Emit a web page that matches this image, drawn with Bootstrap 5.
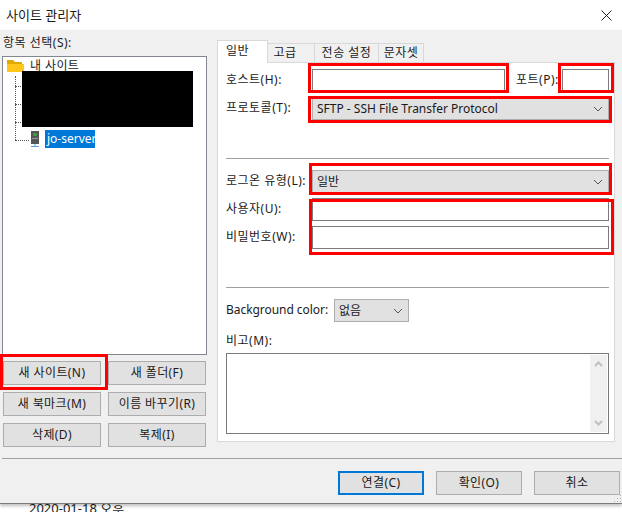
<!DOCTYPE html>
<html lang="ko">
<head>
  <meta charset="UTF-8" />
  <meta name="viewport" content="width=device-width, initial-scale=1" />
  <title>사이트 관리자</title>
  <link href="https://cdn.jsdelivr.net/npm/bootstrap@5.3.0/dist/css/bootstrap.min.css" rel="stylesheet" />
  <style>
    body {
      width: 622px;
      height: 512px;
      overflow: hidden;
      background: #fff;
      color: #1a1a1a;
      font: 12px/16px "Noto Sans", "Noto Sans CJK KR", sans-serif;
      position: relative;
    }
    .title-bar { height: 30px; padding: 0 6px; font-size: 13px; }
    .close-x { margin-left: auto; margin-right: 4px; }
    .dlg { height: 474px; background: #f0f0f0; border-bottom: 1px solid #7a7a7a; box-shadow: 0 2px 3px rgba(0,0,0,.25); position: relative; }
    .main-area { height: 428px; }
    .left-pane { width: 217px; padding: 4px 0 0 2px; }
    .left-pane > label { height: 22px; padding: 1px 0 0 1px; margin: 0; letter-spacing: .5px; }
    .tree { width: 205px; height: 299px; background: #fff; border: 1px solid #828790; position: relative; }
    .tree-row { position: absolute; display: flex; align-items: center; }
    .tree-root { left: 4px; top: 1px; height: 16px; gap: 6px; letter-spacing: .4px; }
    .tree-sel { left: 27px; top: 73px; gap: 5px; height: 18px; }
    .tree-sel span { background: #0078d7; color: #fff; padding: 0 1px 0 2px; line-height: 18px; width: 50px; white-space: nowrap; }
    .redact { position: absolute; left: 19px; top: 14px; width: 171px; height: 56px; background: #000; }
    .dots-v { position: absolute; left: 12px; top: 19px; height: 64px; border-left: 1px dotted #555; }
    .dots-h { position: absolute; left: 12px; width: 14px; border-top: 1px dotted #555; }
    .side-btns { display: grid; grid-template-columns: 98px 98px; column-gap: 7px; row-gap: 7px; margin: 6px 0 0 1px; }
    .win-btn { height: 24px; padding: 0; background: #e1e1e1; border: 1px solid #adadad; border-radius: 0; font-size: 12px; line-height: 16px; color: #1a1a1a; letter-spacing: .4px; }
    .win-btn.is-default { border: 2px solid #0078d7; }
    .right-pane { width: 398px; padding-top: 10px; }
    .tab-strip { height: 22px; border: 0; align-items: flex-end; flex-wrap: nowrap; position: relative; z-index: 1; letter-spacing: .5px; }
    .tab-item { height: 19px; background: #f0f0f0; border: 1px solid #d9d9d9; border-bottom: 0; border-left: 0; text-align: center; line-height: 18px; margin: 0; }
    .tab-item.is-on { background: #fff; border-left: 1px solid #d9d9d9; margin-bottom: -1px; height: 23px; line-height: 20px; padding-right: 10px; }
    .tab-item.tab-short { padding-right: 12px; }
    .tab-box { height: 380px; background: #fff; border: 1px solid #d9d9d9; padding: 6px 5px 0 8px; }
    .form-line { display: flex; align-items: center; }
    .form-line label { width: 86px; flex: none; margin: 0; white-space: nowrap; position: relative; top: -1px; letter-spacing: .5px; }
    .win-input { height: 23px; border: 1px solid #7a7a7a; border-radius: 0; padding: 0 4px; background: #fff; }
    .win-select { height: 23px; border: 1px solid #adadad; border-radius: 0; padding: 0 4px; font-size: 12px; line-height: 16px; color: #1a1a1a; background-color: #e1e1e1; background-size: 10px 6px; background-position: right 5px center; box-shadow: none;
      background-image: url("data:image/svg+xml,%3csvg xmlns='http://www.w3.org/2000/svg' viewBox='0 0 10 6'%3e%3cpath fill='none' stroke='%23555' d='M1 1l4 4 4-4'/%3e%3c/svg%3e"); }
    .form-line .port-label { margin-left: 11px; width: 46px; }
    .form-line .bg-label { width: 108px; letter-spacing: -.05px; }
    .proto-line { margin-top: 6px; }
    .proto-line .win-select { height: 22px; }
    .memo-label { margin: 11px 0 0; height: 20px; letter-spacing: .5px; }
    .divider { height: 1px; background: #a0a0a0; margin: 0; opacity: 1; border: 0; }
    .memo { height: 81px; width: 383px; border: 1px solid #7a7a7a; background: #fff; display: flex; justify-content: flex-end; padding: 1px; }
    .memo-scroll { width: 17px; background: #f0f0f0; display: flex; flex-direction: column; justify-content: space-between; align-items: center; padding: 6px 0; }
    .foot-sep { margin: 0 0 0 2px; height: 1px; background: #a0a0a0; border: 0; opacity: 1; }
    .foot-btns { padding: 12px 2px 0 0; gap: 12px; justify-content: flex-end; }
    .foot-btns .win-btn { width: 86px; }
    .grip { position: absolute; right: 1px; bottom: 1px; width: 8px; height: 8px; background: radial-gradient(circle, #aaa 1px, transparent 1px) 0 0 / 3px 3px; clip-path: polygon(100% 0, 100% 100%, 0 100%); }
    .under-text { padding-left: 29px; line-height: 16px; margin-top: -4px; font-size: 13px; }
    .mark-red { position: absolute; border: 3px solid #f00; pointer-events: none; z-index: 5; }
  </style>
</head>
<body>
  <div class="title-bar d-flex align-items-center">
    <span>사이트 관리자</span>
    <svg class="close-x" width="11" height="11" viewBox="0 0 11 11"><path d="M0.5 0.5l10 10M10.5 0.5l-10 10" stroke="#222" fill="none"/></svg>
  </div>

  <div class="dlg">
    <div class="main-area d-flex">
      <div class="left-pane">
        <label class="d-block">항목 선택(S):</label>
        <div class="tree">
          <div class="tree-row tree-root">
            <svg width="17" height="14" viewBox="0 0 17 14"><path d="M0 1h6l2 2h7v3H0z" fill="#e0a800"/><path d="M0 5h17v8H0z" fill="#ffc61a"/></svg>
            <span>내 사이트</span>
          </div>
          <div class="dots-v"></div>
          <div class="dots-h" style="top: 29px"></div>
          <div class="dots-h" style="top: 47px"></div>
          <div class="dots-h" style="top: 65px"></div>
          <div class="dots-h" style="top: 83px"></div>
          <div class="redact"></div>
          <div class="tree-row tree-sel">
            <svg width="10" height="17" viewBox="0 0 10 17"><rect x="1" y="0" width="8" height="13" fill="#555"/><rect x="3" y="2" width="4" height="3" fill="#3f9a3f"/><rect x="2" y="7" width="6" height="1" fill="#999"/><path d="M5 13v3M1 15.500h8" stroke="#5b9bd5" fill="none"/></svg>
            <span>jo-server</span>
          </div>
        </div>
        <div class="side-btns">
          <button class="btn win-btn">새 사이트(N)</button>
          <button class="btn win-btn">새 폴더(F)</button>
          <button class="btn win-btn">새 북마크(M)</button>
          <button class="btn win-btn">이름 바꾸기(R)</button>
          <button class="btn win-btn">삭제(D)</button>
          <button class="btn win-btn">복제(I)</button>
        </div>
      </div>

      <div class="right-pane">
        <div class="nav tab-strip">
          <div class="tab-item is-on" style="width: 51px">일반</div>
          <div class="tab-item tab-short" style="width: 47px">고급</div>
          <div class="tab-item" style="width: 64px">전송 설정</div>
          <div class="tab-item" style="width: 45px">문자셋</div>
        </div>
        <div class="tab-box">
          <div class="form-line">
            <label>호스트(H):</label>
            <input class="form-control win-input flex-grow-0" style="width: 193px" />
            <label class="port-label">포트(P):</label>
            <input class="form-control win-input flex-grow-0" style="width: 47px" />
          </div>
          <div class="form-line proto-line">
            <label>프로토콜(T):</label>
            <select class="form-select win-select" style="width: 297px"><option>SFTP - SSH File Transfer Protocol</option></select>
          </div>
          <hr class="divider" style="margin-top: 38px" />
          <div class="form-line" style="margin-top: 11px">
            <label>로그온 유형(L):</label>
            <select class="form-select win-select" style="width: 297px"><option>일반</option></select>
          </div>
          <div class="form-line" style="margin-top: 5px">
            <label>사용자(U):</label>
            <input class="form-control win-input flex-grow-0" style="width: 297px" />
          </div>
          <div class="form-line" style="margin-top: 5px">
            <label>비밀번호(W):</label>
            <input class="form-control win-input flex-grow-0" style="width: 297px" />
          </div>
          <hr class="divider" style="margin-top: 38px" />
          <div class="form-line" style="margin-top: 11px">
            <label class="bg-label">Background color:</label>
            <select class="form-select win-select" style="width: 75px"><option>없음</option></select>
          </div>
          <label class="d-block memo-label">비고(M):</label>
          <div class="memo">
            <div class="memo-scroll">
              <svg width="9" height="6" viewBox="0 0 9 6"><path d="M1 5l3.500-3.500L8 5" stroke="#c0c0c0" stroke-width="2" fill="none"/></svg>
              <svg width="9" height="6" viewBox="0 0 9 6"><path d="M1 1l3.500 3.500L8 1" stroke="#c0c0c0" stroke-width="2" fill="none"/></svg>
            </div>
          </div>
        </div>
      </div>
    </div>
    <hr class="foot-sep" />
    <div class="foot-btns d-flex">
      <button class="btn win-btn is-default">연결(C)</button>
      <button class="btn win-btn">확인(O)</button>
      <button class="btn win-btn">취소</button>
    </div>
    <div class="grip"></div>
  </div>
  <div class="under-text">2020-01-18 오후</div>

  <div class="mark-red" style="left: 308px; top: 63px; width: 201px; height: 30px"></div>
  <div class="mark-red" style="left: 558px; top: 63px; width: 56px; height: 30px"></div>
  <div class="mark-red" style="left: 308px; top: 96px; width: 304px; height: 27px"></div>
  <div class="mark-red" style="left: 309px; top: 163px; width: 303px; height: 32px"></div>
  <div class="mark-red" style="left: 309px; top: 199px; width: 305px; height: 56px"></div>
  <div class="mark-red" style="left: 0; top: 354px; width: 108px; height: 36px"></div>
</body>
</html>
